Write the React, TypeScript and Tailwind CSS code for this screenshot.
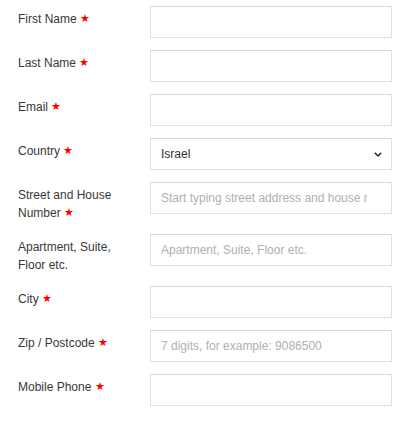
import React from "react";

type Field = {
  label: string;
  required?: boolean;
  placeholder?: string;
  select?: string;
  padRight?: boolean;
};

const FIELDS: Field[] = [
  { label: "First Name", required: true },
  { label: "Last Name", required: true },
  { label: "Email", required: true },
  { label: "Country", required: true, select: "Israel" },
  {
    label: "Street and House Number",
    required: true,
    placeholder: "Start typing street address and house number",
    padRight: true,
  },
  { label: "Apartment, Suite, Floor etc.", placeholder: "Apartment, Suite, Floor etc." },
  { label: "City", required: true },
  { label: "Zip / Postcode", required: true, placeholder: "7 digits, for example: 9086500" },
  { label: "Mobile Phone", required: true },
];

const Star = () => (
  <span className="text-[#ff0000] text-[11px] leading-[11px] align-[1px]">★</span>
);

const FormRow = ({ field }: { field: Field }) => {
  const boxClass =
    "h-8 w-full border border-[#e0e0e0] border-t-[#d6d6d6] bg-white text-[12px] text-[#333] outline-none";

  return (
    <div className="flex items-start mb-3">
      <label className="w-[132px] shrink-0 pt-[4px] pr-3 text-[12px] leading-[18px] text-[#383838]">
        {field.label}
        {field.required && (
          <>
            {" "}
            <Star />
          </>
        )}
      </label>
      <div className="flex-1">
        {field.select ? (
          <div className={`${boxClass} flex items-center justify-between pl-[10px] pr-2`}>
            <span>{field.select}</span>
            <svg width="8" height="5" viewBox="0 0 8 5" className="mr-px">
              <path d="M0.8 0.8l3.2 3.2L7.2 0.8" fill="none" stroke="#222" strokeWidth="1.4" />
            </svg>
          </div>
        ) : (
          <input
            className={`${boxClass} pl-[10px] ${field.padRight ? "pr-[24px]" : "pr-2"} placeholder:text-[#b0b0b0]`}
            placeholder={field.placeholder}
          />
        )}
      </div>
    </div>
  );
};

export default function App() {
  return (
    <div
      className="w-[406px] min-h-[421px] bg-white pl-[18px] pr-[14px] pt-[6px]"
      style={{ fontFamily: '"Liberation Sans", Arial, Helvetica, sans-serif' }}
    >
      {FIELDS.map((f) => (
        <FormRow key={f.label} field={f} />
      ))}
    </div>
  );
}
